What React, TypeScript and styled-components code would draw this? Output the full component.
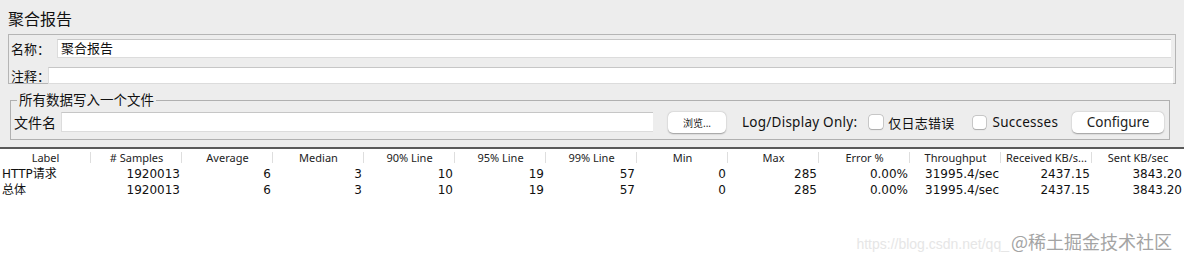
import styled, { createGlobalStyle } from "styled-components";

const GlobalStyle = createGlobalStyle`
  html, body {
    margin: 0;
    padding: 0;
    background: #ffffff;
  }
  body {
    width: 1184px;
    height: 264px;
    overflow: hidden;
    font-family: "Noto Sans", "Noto Sans CJK SC", sans-serif;
    color: #111;
  }
`;

const columns = [
  "Label",
  "# Samples",
  "Average",
  "Median",
  "90% Line",
  "95% Line",
  "99% Line",
  "Min",
  "Max",
  "Error %",
  "Throughput",
  "Received KB/s...",
  "Sent KB/sec",
];

const rows = [
  ["HTTP请求", "1920013", "6", "3", "10", "19", "57", "0", "285", "0.00%", "31995.4/sec", "2437.15", "3843.20"],
  ["总体", "1920013", "6", "3", "10", "19", "57", "0", "285", "0.00%", "31995.4/sec", "2437.15", "3843.20"],
];

const Page = styled.div`
  position: relative;
  width: 1184px;
  height: 264px;
  display: flex;
  flex-direction: column;
`;

const Panel = styled.div`
  background: #ededed;
  padding: 8px 8px 7px 8px;
  border-bottom: 2px solid #5a5a5a;
  display: flex;
  flex-direction: column;
  align-items: flex-start;
`;

const Title = styled.div`
  font-size: 16px;
  line-height: 22px;
  height: 22px;
  margin-bottom: 4px;
  color: #111;
`;

const NameBox = styled.div`
  align-self: stretch;
  box-sizing: border-box;
  border: 1px solid #b5b5b5;
  height: 50px;
  display: flex;
  flex-direction: column;
  padding: 4px 3px 0 2px;
  gap: 8px;
`;

const FieldRow = styled.div<{ $labelWidth: number }>`
  display: grid;
  grid-template-columns: ${(p) => p.$labelWidth}px 1fr;
  align-items: center;
`;

const Label = styled.span<{ $size?: number }>`
  font-size: ${(p) => p.$size ?? 13}px;
  white-space: nowrap;
`;

const Field = styled.div<{ $h: number; $right?: number }>`
  height: ${(p) => p.$h}px;
  margin-right: ${(p) => p.$right ?? 0}px;
  background: #ffffff;
  border-top: 1px solid #c6c6c6;
  border-left: 1px solid #dcdcdc;
  border-bottom: 1px solid #dcdcdc;
  box-sizing: border-box;
  font-size: 13px;
  line-height: ${(p) => p.$h - 2}px;
  padding-left: 3px;
`;

const FileSet = styled.fieldset`
  margin: 9px 0 0 2px;
  padding: 5px 4px 7px 3px;
  border: 1px solid #b0b0b0;
  width: 1160px;
  min-width: 0;
  box-sizing: border-box;
`;

const Legend = styled.legend`
  font-size: 13.5px;
  padding: 0 2px;
  margin-left: 3px;
  line-height: 14px;
`;

const FileRow = styled.div`
  display: flex;
  align-items: center;
  height: 20px;
`;

const FileField = styled.div`
  width: 592px;
  height: 20px;
  margin-left: 5px;
  background: #fff;
  border-top: 1px solid #c6c6c6;
  border-left: 1px solid #dcdcdc;
  border-bottom: 1px solid #dcdcdc;
  box-sizing: border-box;
  flex: none;
`;

const MacButton = styled.div<{ $w: number; $size: number; $ml: number }>`
  width: ${(p) => p.$w}px;
  height: 21px;
  margin-left: ${(p) => p.$ml}px;
  border-radius: 5px;
  background: #ffffff;
  box-shadow: 0 0.5px 1.5px rgba(0, 0, 0, 0.35);
  display: flex;
  align-items: center;
  justify-content: center;
  font-size: ${(p) => p.$size}px;
  color: #222;
  box-sizing: border-box;
  flex: none;
`;

const Text = styled.span<{ $ml: number; $size: number }>`
  margin-left: ${(p) => p.$ml}px;
  font-size: ${(p) => p.$size}px;
  letter-spacing: 0.25px;
  white-space: nowrap;
  flex: none;
`;

const Check = styled.span<{ $ml: number; $s: number }>`
  margin-left: ${(p) => p.$ml}px;
  width: ${(p) => p.$s}px;
  height: ${(p) => p.$s}px;
  border-radius: 3px;
  background: #fff;
  box-shadow: 0 0 0 0.5px #a8a8a8, 0 0.5px 1px rgba(0, 0, 0, 0.25);
  flex: none;
`;

const Table = styled.div`
  display: grid;
  grid-template-columns: repeat(12, 91px) 1fr;
  font-family: "DejaVu Sans", "Noto Sans CJK SC", sans-serif;
  font-size: 12px;
`;

const HeadCell = styled.div<{ $last?: boolean }>`
  height: 17px;
  display: flex;
  align-items: center;
  justify-content: center;
  font-family: "Noto Sans", "Noto Sans CJK SC", sans-serif;
  font-size: 11px;
  color: #222;
  position: relative;
  &::after {
    content: "";
    display: ${(p) => (p.$last ? "none" : "block")};
    position: absolute;
    right: 0;
    top: 3px;
    height: 11px;
    border-right: 1px solid #dedede;
  }
`;

const Cell = styled.div<{ $left?: boolean }>`
  height: 16px;
  line-height: 16px;
  text-align: ${(p) => (p.$left ? "left" : "right")};
  padding: 0 2px;
  white-space: nowrap;
  color: #111;
`;

const Watermark = styled.div`
  position: absolute;
  right: 12px;
  bottom: 10px;
  display: flex;
  align-items: baseline;
  gap: 2px;
  white-space: nowrap;
`;

const WatermarkUrl = styled.span`
  font-size: 14px;
  color: #e6e6e6;
  font-family: "Liberation Sans", sans-serif;
`;

const WatermarkBrand = styled.span`
  font-size: 18px;
  color: #a4a4a4;
  font-family: "Noto Sans CJK SC", sans-serif;
  text-shadow: 0 0 1px #fff;
`;

export default function App() {
  return (
    <>
      <GlobalStyle />
      <Page>
        <Panel>
          <Title>聚合报告</Title>
          <NameBox>
            <FieldRow $labelWidth={46}>
              <Label>名称：</Label>
              <Field $h={19} $right={1}>聚合报告</Field>
            </FieldRow>
            <FieldRow $labelWidth={37}>
              <Label>注释：</Label>
              <Field $h={17} $right={-1} />
            </FieldRow>
          </NameBox>
          <FileSet>
            <Legend>所有数据写入一个文件</Legend>
            <FileRow>
              <Label $size={14}>文件名</Label>
              <FileField />
              <MacButton $w={58} $size={10} $ml={15}>
                浏览...
              </MacButton>
              <Text $ml={16} $size={13.5}>Log/Display Only:</Text>
              <Check $ml={12} $s={14} />
              <Text $ml={5} $size={13}>仅日志错误</Text>
              <Check $ml={18} $s={13} />
              <Text $ml={7} $size={13.5}>Successes</Text>
              <MacButton $w={92} $size={13.5} $ml={14}>
                Configure
              </MacButton>
            </FileRow>
          </FileSet>
        </Panel>
        <Table>
          {columns.map((c, i) => (
            <HeadCell key={c} $last={i === columns.length - 1}>
              {c}
            </HeadCell>
          ))}
          {rows.map((r, ri) =>
            r.map((v, ci) => (
              <Cell key={`${ri}-${ci}`} $left={ci === 0}>
                {v}
              </Cell>
            ))
          )}
        </Table>
        <Watermark>
          <WatermarkUrl>https://blog.csdn.net/qq_</WatermarkUrl>
          <WatermarkBrand>@稀土掘金技术社区</WatermarkBrand>
        </Watermark>
      </Page>
    </>
  );
}
